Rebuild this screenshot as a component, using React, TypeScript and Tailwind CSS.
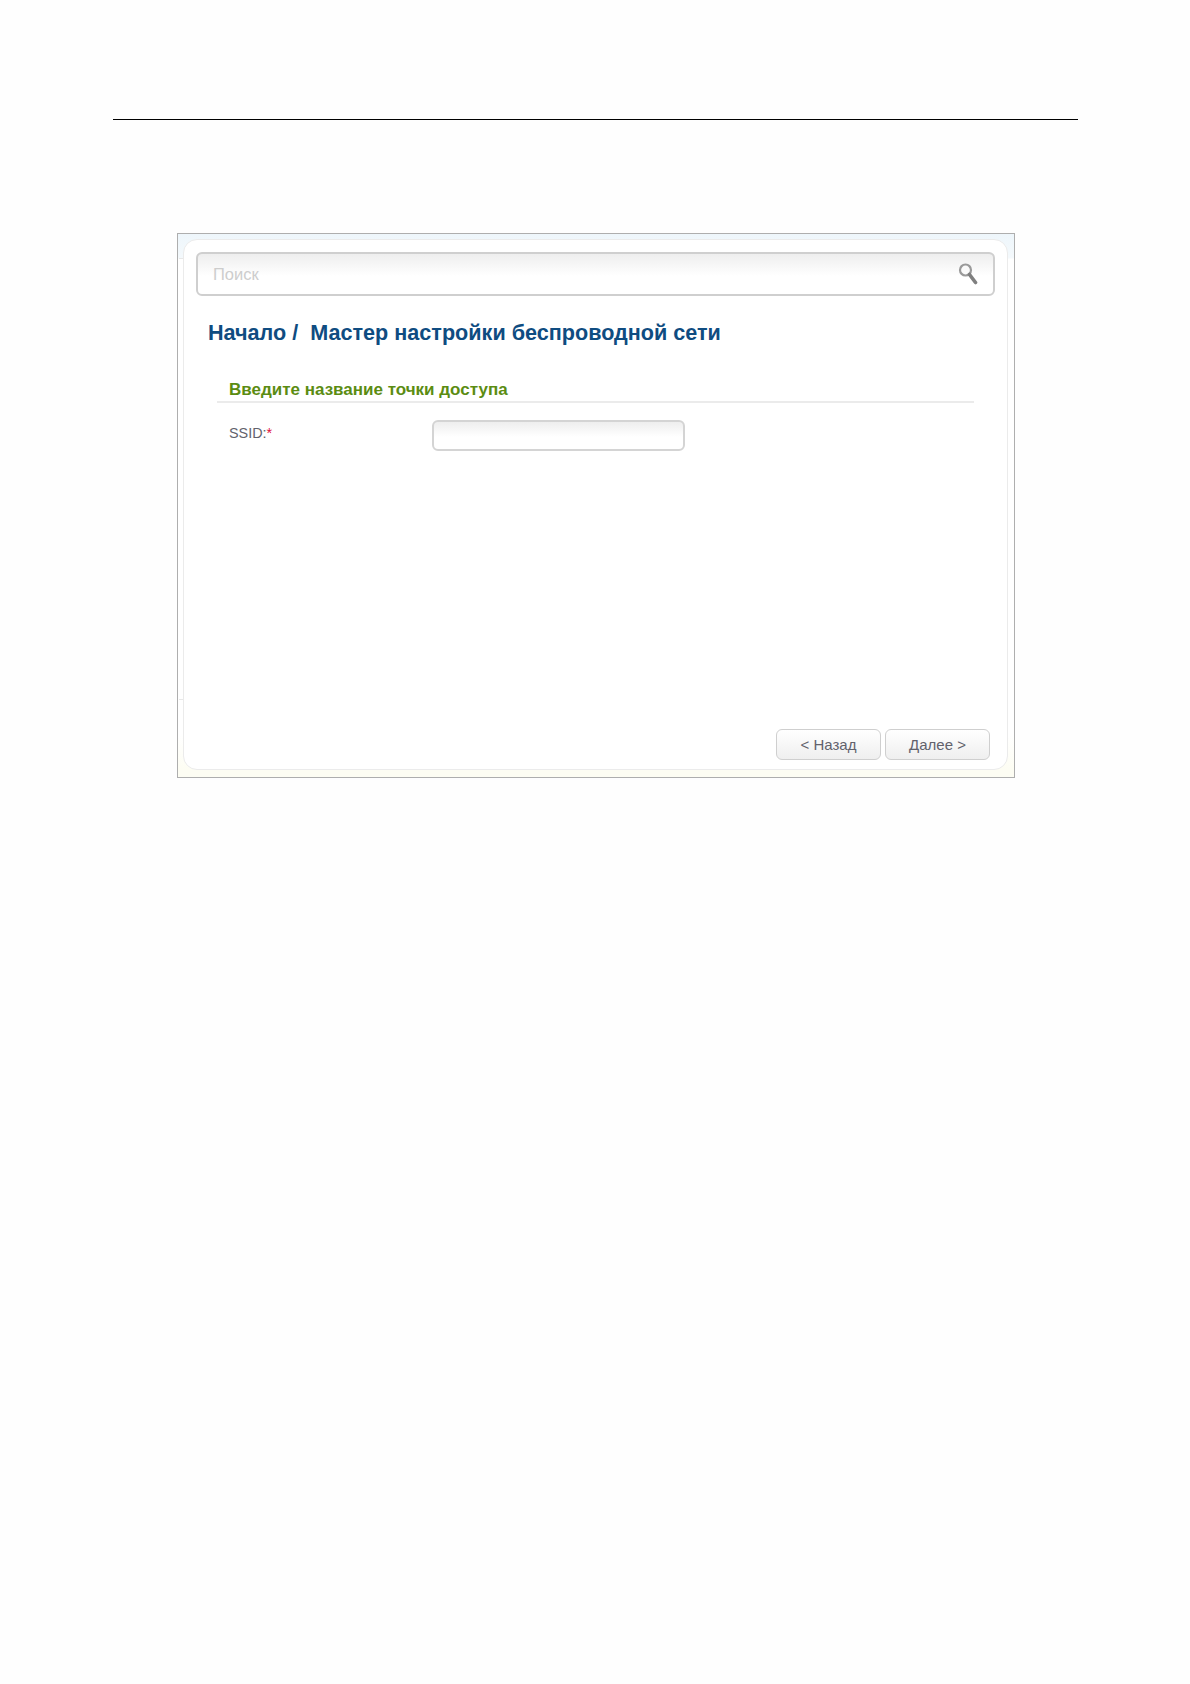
import React from 'react';

const SearchIcon: React.FC = () => (
  <svg width="20" height="24" viewBox="0 0 20 24" fill="none">
    <circle cx="7.5" cy="8" r="5.5" stroke="#9a9a9a" strokeWidth="2.2" fill="#fafafa" />
    <path d="M11.5 12.5 L17.5 20.5" stroke="#7f7f7f" strokeWidth="3.6" strokeLinecap="round" />
  </svg>
);

const WizardButton: React.FC<{ label: string }> = ({ label }) => (
  <button className="h-[31px] w-[105px] rounded-[6px] border border-[#cfcfcf] bg-gradient-to-b from-white to-[#efefef] text-[15px] leading-[29px] text-[#62626c]">
    {label}
  </button>
);

export default function App() {
  return (
    <div className="min-h-[1684px] bg-[#fefefe] pt-[119px] font-['Liberation_Sans',Arial,sans-serif]">
      <div className="ml-[113px] h-px w-[965px] bg-black" />

      {/* Screenshot frame */}
      <div className="relative ml-[177px] mt-[113px] h-[545px] w-[838px] border border-[#aeaeae] bg-[linear-gradient(#eef6fb_0,#f4f9fc_24px,#fff_25px,#fff_500px,#fdfdf3_535px,#fdfdf3_100%)] p-[5px] pr-[6px] pb-[7px]">
        {/* leftover seams on the left strip of the screenshot */}
        <div className="absolute left-[1px] top-[24px] h-px w-[5px] bg-[#e8e8e8]" />
        <div className="absolute left-[1px] top-[465px] h-px w-[5px] bg-[#e8e8e8]" />

        <div className="relative flex h-full flex-col rounded-[14px] border border-[#ebebeb] bg-white px-[12px] pt-[12px]">
          {/* Search */}
          <div className="flex h-[44px] items-center justify-between rounded-[6px] border-2 border-[#cfcfcf] bg-gradient-to-b from-[#eeeeee] to-white to-[55%] pl-[15px] pr-[15px]">
            <span className="text-[16.5px] text-[#cdcdcd]">Поиск</span>
            <SearchIcon />
          </div>

          <h1 className="ml-[12px] mt-[24px] text-[21.6px] font-bold leading-[26px] text-[#0f4c81]">
            Начало /&nbsp; Мастер настройки беспроводной сети
          </h1>

          {/* Section */}
          <div className="ml-[21px] mt-[34px] w-[757px] border-b-2 border-[#ebebeb] pb-[1px] pl-[12px]">
            <h2 className="text-[17px] font-bold leading-[20px] text-[#5b8c12]">Введите название точки доступа</h2>
          </div>

          <div className="ml-[33px] mt-[17px] flex items-start">
            <label className="w-[203px] pt-[4px] text-[14.4px] leading-[18px] text-[#62626c]">
              SSID:<span className="text-[#e0103a]">*</span>
            </label>
            <input
              type="text"
              className="h-[31px] w-[253px] rounded-[6px] border-2 border-[#d4d4d4] bg-gradient-to-b from-[#eeeeee] to-white to-[55%] outline-none"
            />
          </div>

          {/* Footer buttons */}
          <div className="mb-[9px] mt-auto flex justify-end gap-[4px] pr-[5px]">
            <WizardButton label="< Назад" />
            <WizardButton label="Далее >" />
          </div>
        </div>
      </div>
    </div>
  );
}
